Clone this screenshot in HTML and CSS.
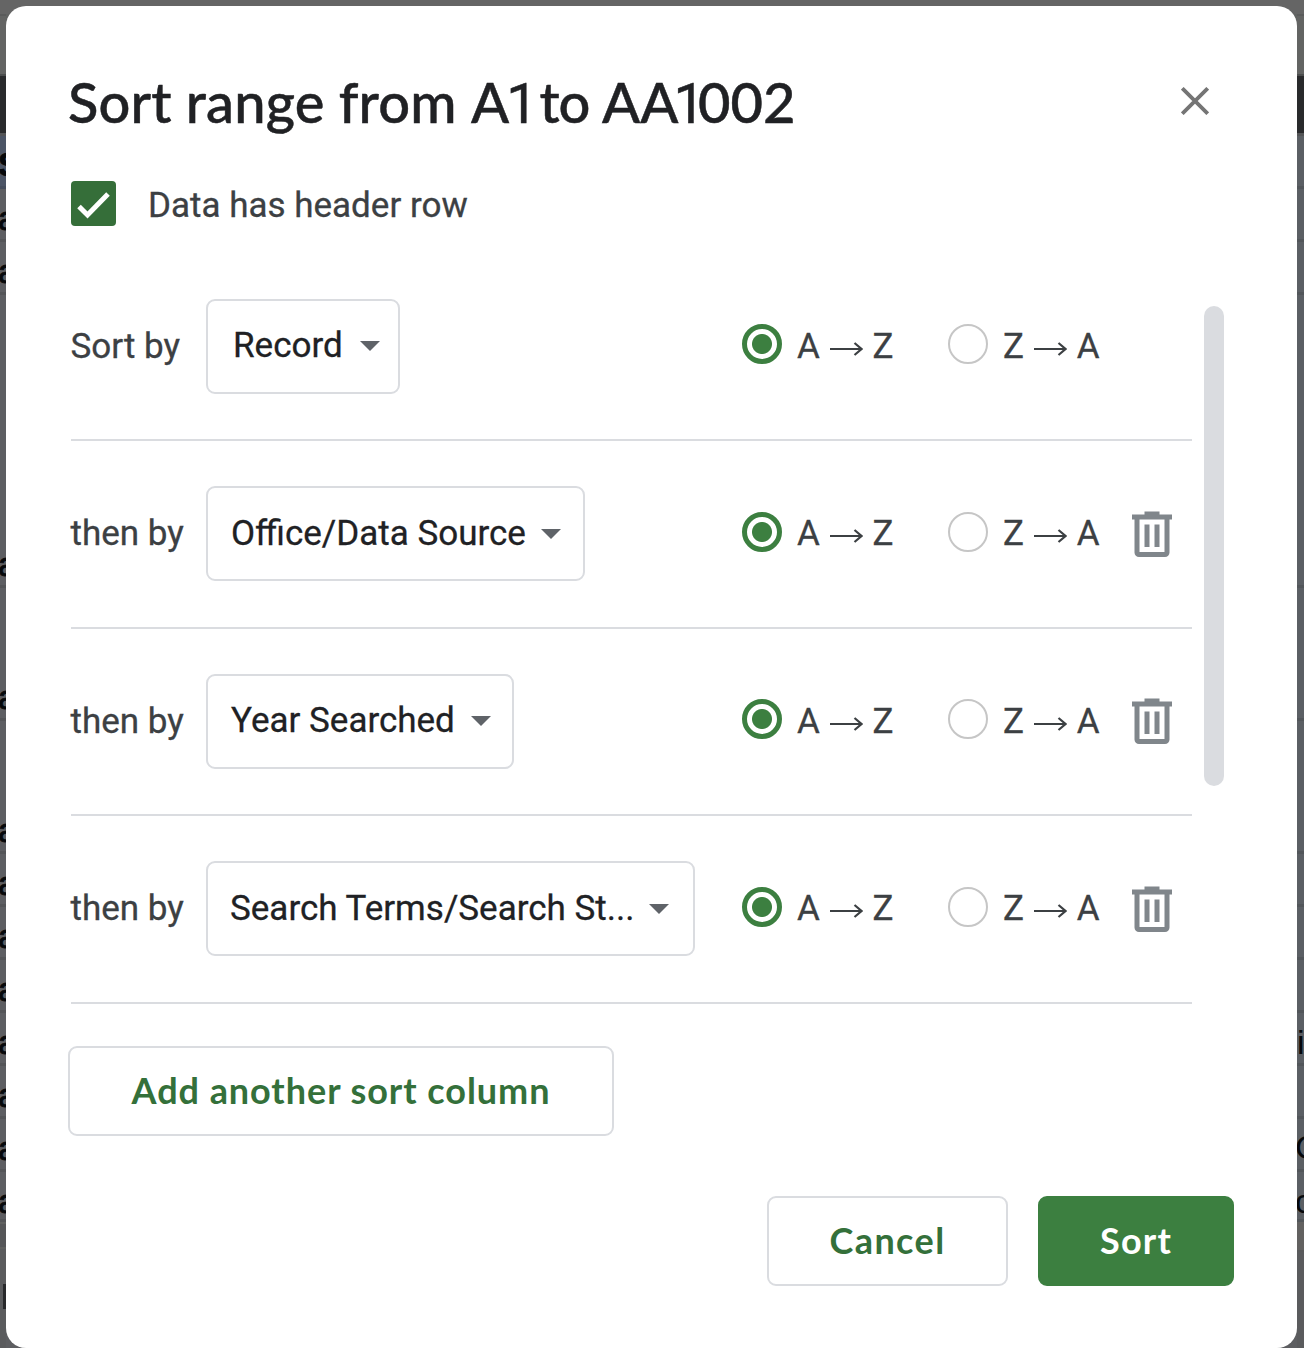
FILE: index.html
```html
<!DOCTYPE html>
<html lang="en">
<head>
<meta charset="utf-8">
<title>Sort range</title>
<link rel="stylesheet" href="styles.css">
</head>
<body>
<svg class="defs" width="0" height="0" aria-hidden="true">
  <symbol id="trash" viewBox="0 0 40 46"><path fill-rule="evenodd" d="M12.500 0.500h15v3H40v5H37.500V41.500a4.500 4.500 0 0 1-4.500 4.500H7a4.500 4.500 0 0 1-4.500-4.500V8.500H0v-5h12.500zM7.500 8.500v32.500h25V8.500zM12.500 13.500h5V36h-5zM22.500 13.500h5V36h-5z"/></symbol>
  <symbol id="arrow" viewBox="0 0 33 14"><path d="M0 7H31M24.500 1L31.500 7L24.500 13" fill="none" stroke="currentColor" stroke-width="2.200"/></symbol>
</svg>
<main class="screen">
  <div class="strip left">
    <div class="menu"></div><div class="tools"></div><div class="frozen"></div>
    <div class="cell head"><b>S</b></div>
    <div class="cell"><span>a</span></div>
    <div class="cell"><span>a</span></div>
    <div class="cell tall6"><span>a</span></div>
    <div class="cell tall3"><span>a</span></div>
    <div class="cell tall3"><span>a</span></div>
    <div class="cell"><span>a</span></div>
    <div class="cell"><span>a</span></div>
    <div class="cell"><span>a</span></div>
    <div class="cell"><span>a</span></div>
    <div class="cell"><span>a</span></div>
    <div class="cell"><span>a</span></div>
    <div class="cell last"><span>a</span></div>
    <div class="scrollrow"></div>
    <div class="tabs"><i></i></div>
  </div>
  <section class="dialog">
    <header class="top">
      <h1><span class="words">Sort range from </span><span class="pre1">A</span><span class="one">1</span><span class="to"> to </span>A<span class="pre1 close1">A</span><span class="one tight">1</span>002</h1>
      <svg class="close" viewBox="0 0 28 28"><path d="M1.300 1.300L26.700 26.700M26.700 1.300L1.300 26.700"/></svg>
    </header>
    <label class="check">
      <svg class="box" viewBox="0 0 45 45"><rect width="45" height="45" rx="4"/><path d="M8 25.500L16.500 34L37 13"/></svg>
      <span>Data has header row</span>
    </label>
    <div class="listwrap">
      <div class="list">
        <div class="row"><span class="by first">Sort by</span><span class="select s1"><span>Record</span><i></i></span>
          <span class="order"><i class="radio on"></i><span class="az">A<svg><use href="#arrow"/></svg>Z</span><i class="radio"></i><span class="az">Z<svg><use href="#arrow"/></svg>A</span></span></div>
        <div class="row"><span class="by">then by</span><span class="select s2"><span>Office/Data Source</span><i></i></span>
          <span class="order"><i class="radio on"></i><span class="az">A<svg><use href="#arrow"/></svg>Z</span><i class="radio"></i><span class="az">Z<svg><use href="#arrow"/></svg>A</span><svg class="trash"><use href="#trash"/></svg></span></div>
        <div class="row"><span class="by">then by</span><span class="select s3"><span>Year Searched</span><i></i></span>
          <span class="order"><i class="radio on"></i><span class="az">A<svg><use href="#arrow"/></svg>Z</span><i class="radio"></i><span class="az">Z<svg><use href="#arrow"/></svg>A</span><svg class="trash"><use href="#trash"/></svg></span></div>
        <div class="row"><span class="by">then by</span><span class="select s4"><span>Search Terms/Search St...</span><i></i></span>
          <span class="order"><i class="radio on"></i><span class="az">A<svg><use href="#arrow"/></svg>Z</span><i class="radio"></i><span class="az">Z<svg><use href="#arrow"/></svg>A</span><svg class="trash"><use href="#trash"/></svg></span></div>
      </div>
      <div class="thumb"></div>
    </div>
    <button class="btn add"><span>Add another sort column</span></button>
    <footer class="actions"><button class="btn cancel"><span>Cancel</span></button><button class="btn sort"><span>Sort</span></button></footer>
  </section>
  <div class="strip right">
    <div class="menu"></div><div class="tools"></div><div class="frozen"></div>
    <div class="cell head"></div>
    <div class="cell"></div>
    <div class="cell"></div>
    <div class="cell tall6"></div>
    <div class="cell tall3"></div>
    <div class="cell tall3"></div>
    <div class="cell"></div>
    <div class="cell"></div>
    <div class="cell"></div>
    <div class="cell"><span class="i">i</span></div>
    <div class="cell"></div>
    <div class="cell"><span class="c">C</span></div>
    <div class="cell last"><span class="c">c</span></div>
    <div class="scrollrow"></div>
    <div class="tabs"></div>
  </div>
</main>
</body>
</html>
```
FILE: styles.css
```css
* { box-sizing: border-box; }
body { margin: 0; background: #5d5e61; }
.defs { display: block; height: 0; }
.screen {
  display: grid;
  grid-template-columns: 6px 1291px 7px;
  height: 1348px;
  overflow: hidden;
  background: linear-gradient(#656565 0 14px, #606261 14px 74px, #5d5e61 76px);
  font-family: Roboto, sans-serif;
}
.strip { display: flex; flex-direction: column; overflow: hidden; height: 1348px; }
.strip > div { flex: none; }
.menu { height: 16px; background: #656565; border-bottom: 2px solid #5a5b5b; }
.tools { height: 60px; background: #636463; border-bottom: 2px solid #4c4e4e; }
.frozen { height: 60px; background: #292a2c; border-bottom: 3px solid #535456; }
.cell {
  height: 53px;
  display: flex;
  align-items: flex-end;
  overflow: hidden;
  background: #5d5e62;
  border-bottom: 3px solid #545558;
  font: 34px/42px "Liberation Sans", sans-serif;
  color: #06080b;
  -webkit-text-stroke: 0.8px #06080b;
}
.right .cell { background: #5b5f64; border-color: #52565a; -webkit-text-stroke: 0; }
.left .head { background: #4c5566; border-color: #464e5d; }
.cell span, .cell b { margin-left: -2px; height: 42px; }
.cell b { height: 43px; }
.right .cell .i { margin-left: 0; }
.right .cell .c { margin-left: -2px; height: 43px; }
.cell.tall6 { height: 293px; }
.cell.tall3 { height: 133px; }
.cell.last { height: 50px; }
.left .cell.last span, .right .cell.last .c { height: 39px; }
.scrollrow { height: 27px; background: #555658; border-top: 2px solid #606160; border-bottom: 2px solid #5f605f; }
.right .scrollrow { height: 30px; background: #626160; border-color: #595a5b; border-top: 0; }
.tabs { flex: 1 !important; background: #5a5b5d; padding: 35px 0 0 3px; }
.tabs i { display: block; width: 3px; height: 25px; background: #28292b; }

.dialog {
  height: 1342px;
  margin-top: 6px;
  padding: 62px 63px 56px 62px;
  border-radius: 20px;
  background: #fff;
  display: flex;
  flex-direction: column;
}
.top { display: flex; justify-content: space-between; height: 70px; padding-right: 26px; }
h1 { margin: -1px 0 0; font: 500 56px/70px Lato, sans-serif; color: #202124; white-space: nowrap; -webkit-text-stroke: 0.5px; }
.words { letter-spacing: 0.15px; }
.pre1 { letter-spacing: -3px; }
.pre1.close1 { letter-spacing: -5px; }
.one { font-family: Roboto, sans-serif; font-weight: 400; letter-spacing: -11px; }
.one.tight { letter-spacing: -7px; }
.to { letter-spacing: -1.2px; }
.close { width: 28px; height: 28px; margin: 19px -0.500px 0 0; fill: none; stroke: #757575; stroke-width: 3.8; }
.check { display: flex; align-items: center; height: 45px; margin: 43px 0 0 3px; gap: 32px; font-size: 35px; color: #3c4043; }
.check span { padding-top: 3px; -webkit-text-stroke: 0.3px; }
.box { width: 45px; height: 45px; fill: #356e39; }
.box path { fill: none; stroke: #fff; stroke-width: 5; }
.listwrap { display: flex; gap: 12px; margin: 27.400px 0 0 3px; height: 750.600px; }
.list { width: 1121px; }
.thumb { width: 20px; height: 480px; margin-top: 52.600px; border-radius: 10px; background: #dadce0; }
.row { display: flex; align-items: center; height: 187.600px; border-bottom: 2px solid #dadce0; font-size: 35px; color: #3c4043; white-space: nowrap; -webkit-text-stroke: 0.3px; }
.by { width: 135.500px; margin-left: -0.500px; }
.select { height: 95px; display: flex; align-items: center; justify-content: space-between; border: 2px solid #dadce0; border-radius: 9px; color: #202124; padding: 0 18px 1px 23px; }
.select i { border: 10px solid transparent; border-top-color: #5f6368; border-bottom: 0; margin-top: 1px; }
.s1 { width: 194px; padding-left: 25px; }
.s2 { width: 379px; padding-right: 22px; }
.s3 { width: 308px; padding-right: 21px; }
.s4 { width: 489px; padding-left: 22px; padding-right: 24px; }
.order { display: flex; align-items: center; width: 450px; margin-left: auto; }
.radio { width: 40px; height: 40px; border: 2px solid #c6c6c6; border-radius: 50%; margin-top: -4px; }
.radio.on { border: 5px solid #3c7f40; background: radial-gradient(circle, #3c7f40 9.500px, transparent 10.500px); }
.az { display: flex; align-items: center; justify-content: space-between; width: 96.500px; margin: 0 54.500px 0 15px; }
.az svg { width: 33px; height: 14px; margin-top: 5px; }
.radio:not(.on) + .az { margin-right: 32.500px; }
.trash { width: 40px; height: 46px; fill: #80868b; }
.btn { border: 2px solid #dadce0; border-radius: 9px; background: #fff; color: #34703a; height: 90px; font: 700 36px/40px Lato, sans-serif; letter-spacing: 0.95px; padding: 0 0 2px; white-space: nowrap; }
.add { width: 546px; margin-top: 42px; }
.actions { display: flex; justify-content: flex-end; gap: 30px; margin-top: 60px; }
.cancel { width: 241px; letter-spacing: 1.4px; }
.sort { width: 196px; background: #3c7f40; border-color: #3c7f40; color: #fff; letter-spacing: 1.2px; }
```
